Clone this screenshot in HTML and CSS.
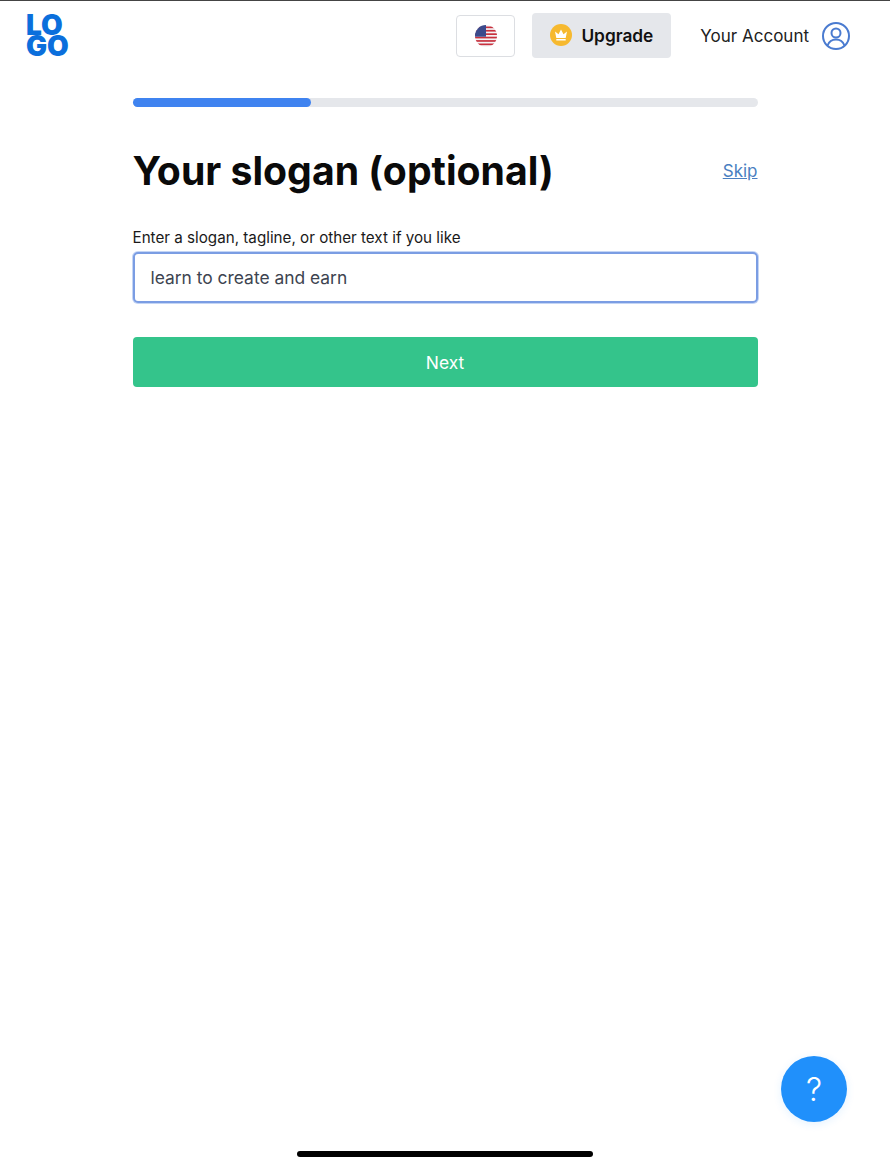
FILE: index.html
```html
<!DOCTYPE html>
<html lang="en">
<head>
  <meta charset="UTF-8">
  <meta name="viewport" content="width=device-width, initial-scale=1.0">
  <title>Your slogan</title>
  <link rel="stylesheet" href="styles.css">
</head>
<body>
  <header class="topbar">
    <div class="logo"><span>LO</span><span>GO</span></div>
    <nav class="topnav">
      <button class="lang-btn" aria-label="Language">
        <svg width="22" height="22" viewBox="0 0 22 22">
          <defs><clipPath id="flagClip"><circle cx="11" cy="11" r="11"/></clipPath></defs>
          <g clip-path="url(#flagClip)">
            <rect width="22" height="22" fill="#f4f4f6"/>
            <rect y="1.500" width="22" height="1.700" fill="#c8313e"/>
            <rect y="4.900" width="22" height="1.700" fill="#c8313e"/>
            <rect y="8.300" width="22" height="1.700" fill="#c8313e"/>
            <rect y="11.700" width="22" height="1.700" fill="#c8313e"/>
            <rect y="15.100" width="22" height="1.700" fill="#c8313e"/>
            <rect y="18.500" width="22" height="1.700" fill="#c8313e"/>
            <rect width="11" height="11.700" fill="#3b4a8c"/>
          </g>
        </svg>
      </button>
      <button class="upgrade-btn">
        <svg width="22" height="22" viewBox="0 0 22 22">
          <circle cx="11" cy="11" r="11" fill="#f6b92f"/>
          <path d="M5 7.500l3.500 2.700L11 5.500l2.500 4.700L17 7.500l-1.300 6.500H6.300z" fill="#fff"/>
          <rect x="6.300" y="15" width="9.400" height="1.500" fill="#fff"/>
        </svg>
        Upgrade
      </button>
      <a class="account" href="#">
        Your Account
        <svg width="30" height="30" viewBox="0 0 30 30" fill="none" stroke="#4a7bd0" stroke-width="2">
          <circle cx="15" cy="15" r="13"/>
          <circle cx="15" cy="12" r="4.500"/>
          <path d="M6.500 24.500c1.500-4 4.500-6 8.500-6s7 2 8.500 6"/>
        </svg>
      </a>
    </nav>
  </header>

  <main class="content">
    <div class="progress"><div class="progress-fill"></div></div>
    <div class="title-row">
      <h1>Your slogan (optional)</h1>
      <a class="skip" href="#">Skip</a>
    </div>
    <label class="field-label" for="slogan">Enter a slogan, tagline, or other text if you like</label>
    <input class="field" id="slogan" type="text" value="learn to create and earn">
    <button class="next-btn">Next</button>
  </main>

  <button class="help-btn" aria-label="Help">?</button>
  <div class="home-bar"></div>
</body>
</html>
```

FILE: styles.css
```css
html, body {
  height: 100%;
}
body {
  margin: 0;
  position: relative;
  min-height: 1165px;
  background: #fff;
  color: #111;
  font-family: Inter, "Liberation Sans", sans-serif;
  border-top: 1px solid #444;
  box-sizing: border-box;
  overflow: hidden;
}
.topbar {
  display: flex;
  justify-content: space-between;
  align-items: center;
  height: 70px;
  padding: 0 39px 0 26px;
}
.logo {
  display: flex;
  flex-direction: column;
  color: #0b6fdc;
  font-size: 28px;
  font-weight: 900;
  line-height: 21px;
  letter-spacing: 0;
}
.topnav {
  display: flex;
  align-items: center;
}
.lang-btn {
  display: flex;
  align-items: center;
  justify-content: center;
  width: 59px;
  height: 42px;
  padding: 0;
  background: #fff;
  border: 1px solid #dcdee2;
  border-radius: 4px;
}
.upgrade-btn {
  display: flex;
  align-items: center;
  gap: 9px;
  height: 45px;
  margin-left: 17px;
  margin-bottom: 2px;
  padding: 0 18px;
  background: #e5e7eb;
  border: none;
  border-radius: 4px;
  color: #111;
  font: 600 17.300px Inter, "Liberation Sans", sans-serif;
}
.account {
  display: flex;
  align-items: center;
  gap: 12px;
  margin-left: 29px;
  color: #222;
  font-size: 17px;
  text-decoration: none;
}
.content {
  width: 625px;
  margin: 27px auto 0;
}
.progress {
  height: 9px;
  background: #e5e7eb;
  border-radius: 5px;
}
.progress-fill {
  width: 178px;
  height: 100%;
  background: #3f83f0;
  border-radius: 5px;
}
.title-row {
  display: flex;
  justify-content: space-between;
  align-items: center;
  margin-top: 40px;
}
h1 {
  margin: 0;
  color: #0a0a0a;
  font-size: 39.200px;
  font-weight: 700;
  line-height: 48px;
}
.skip {
  color: #4a7fc1;
  font-size: 17px;
}
.field-label {
  display: block;
  margin-top: 31px;
  color: #1a1a1a;
  font-size: 15.200px;
  line-height: 24px;
}
.field {
  display: block;
  box-sizing: border-box;
  width: 100%;
  height: 51px;
  margin-top: 2px;
  padding: 0 16px;
  background: #fff;
  border: 2px solid #7b9de3;
  border-radius: 5px;
  box-shadow: 0 0 0 1px #c4d5f5;
  color: #3d4450;
  font: 17.400px Inter, "Liberation Sans", sans-serif;
  outline: none;
}
.next-btn {
  display: block;
  width: 100%;
  height: 50px;
  margin-top: 34px;
  background: #34c48b;
  border: none;
  border-radius: 4px;
  color: #fff;
  font: 17.400px Inter, "Liberation Sans", sans-serif;
}
.help-btn {
  position: absolute;
  left: 781px;
  top: 1055px;
  width: 66px;
  height: 66px;
  padding: 0;
  background: #2090fb;
  border: none;
  border-radius: 50%;
  box-shadow: 0 2px 8px rgba(32,144,251,0.12);
  color: #fff;
  font: 300 32px Inter, "Liberation Sans", sans-serif;
}
.home-bar {
  position: absolute;
  left: 297px;
  top: 1150px;
  width: 296px;
  height: 6px;
  background: #000;
  border-radius: 3px;
}
```
